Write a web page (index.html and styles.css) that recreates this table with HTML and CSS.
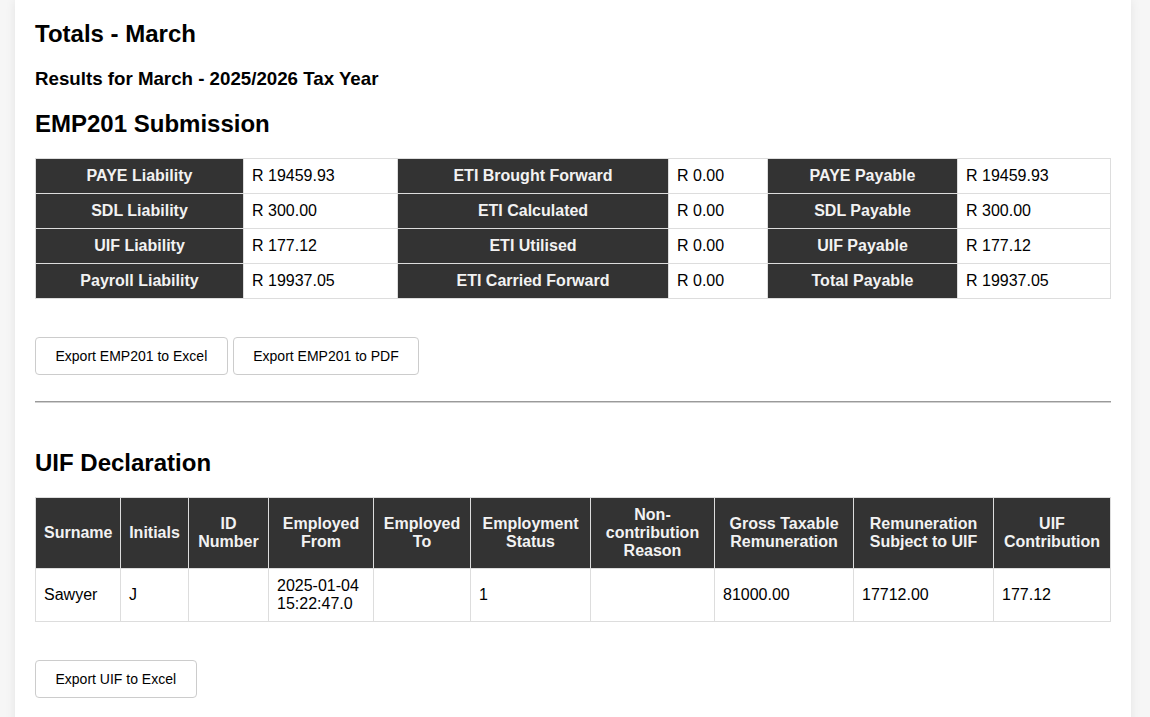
FILE: index.html
```html
<!DOCTYPE html>
<html lang="en">
<head>
<meta charset="utf-8">
<title>Totals - March</title>
<link rel="stylesheet" href="styles.css">
</head>
<body>
<div class="page">
  <h2 class="title">Totals - March</h2>
  <h3 class="subtitle">Results for March - 2025/2026 Tax Year</h3>

  <h2 class="section">EMP201 Submission</h2>
  <table class="grid emp">
    <colgroup>
      <col class="c1"><col class="c2"><col class="c3"><col class="c4"><col class="c5"><col class="c6">
    </colgroup>
    <tbody>
      <tr><th>PAYE Liability</th><td>R 19459.93</td><th>ETI Brought Forward</th><td>R 0.00</td><th>PAYE Payable</th><td>R 19459.93</td></tr>
      <tr><th>SDL Liability</th><td>R 300.00</td><th>ETI Calculated</th><td>R 0.00</td><th>SDL Payable</th><td>R 300.00</td></tr>
      <tr><th>UIF Liability</th><td>R 177.12</td><th>ETI Utilised</th><td>R 0.00</td><th>UIF Payable</th><td>R 177.12</td></tr>
      <tr><th>Payroll Liability</th><td>R 19937.05</td><th>ETI Carried Forward</th><td>R 0.00</td><th>Total Payable</th><td>R 19937.05</td></tr>
    </tbody>
  </table>

  <div class="actions">
    <button class="btn" type="button">Export EMP201 to Excel</button>
    <button class="btn" type="button">Export EMP201 to PDF</button>
  </div>

  <hr class="divider">

  <h2 class="section uif-title">UIF Declaration</h2>
  <table class="grid uif">
    <colgroup>
      <col class="u1"><col class="u2"><col class="u3"><col class="u4"><col class="u5"><col class="u6"><col class="u7"><col class="u8"><col class="u9"><col class="u10">
    </colgroup>
    <thead>
      <tr>
        <th>Surname</th>
        <th>Initials</th>
        <th>ID Number</th>
        <th>Employed From</th>
        <th>Employed To</th>
        <th>Employment Status</th>
        <th>Non-contribution Reason</th>
        <th>Gross Taxable Remuneration</th>
        <th>Remuneration Subject to UIF</th>
        <th>UIF Contribution</th>
      </tr>
    </thead>
    <tbody>
      <tr>
        <td>Sawyer</td>
        <td>J</td>
        <td></td>
        <td>2025-01-04 15:22:47.0</td>
        <td></td>
        <td>1</td>
        <td></td>
        <td>81000.00</td>
        <td>17712.00</td>
        <td>177.12</td>
      </tr>
    </tbody>
  </table>

  <div class="actions">
    <button class="btn" type="button">Export UIF to Excel</button>
  </div>
</div>
</body>
</html>
```

FILE: styles.css
```css
html, body {
  margin: 0;
  padding: 0;
}

body {
  background: #f6f6f6;
  font-family: "Liberation Sans", Arial, sans-serif;
  color: #000;
}

.page {
  box-sizing: border-box;
  width: 1116px;
  min-height: 717px;
  margin-left: 15px;
  padding: 20px 20px 30px;
  background: #fff;
  box-shadow: 0 0 10px rgba(0, 0, 0, 0.08);
}

h2, h3 {
  font-weight: bold;
  line-height: 1.15;
}

.title {
  font-size: 24px;
  margin: 0;
}

.subtitle {
  font-size: 18.72px;
  margin: 20px 0 0;
}

.section {
  font-size: 24px;
  margin: 21px 0 20px;
}

.grid {
  width: 100%;
  border-collapse: collapse;
  table-layout: fixed;
  font-size: 16px;
}

.grid th,
.grid td {
  border: 1px solid #ddd;
  padding: 8px;
  line-height: 18px;
}

.grid th {
  background: #333;
  color: #f2f2f2;
  font-weight: bold;
  text-align: center;
}

.grid td {
  text-align: left;
  background: #fff;
}

.emp .c1 { width: 208px; }
.emp .c2 { width: 154px; }
.emp .c3 { width: 271px; }
.emp .c4 { width: 99px; }
.emp .c5 { width: 190px; }
.emp .c6 { width: 153px; }

.uif .u1 { width: 85px; }
.uif .u2 { width: 68px; }
.uif .u3 { width: 80px; }
.uif .u4 { width: 105px; }
.uif .u5 { width: 97px; }
.uif .u6 { width: 120px; }
.uif .u7 { width: 124px; }
.uif .u8 { width: 139px; }
.uif .u9 { width: 140px; }
.uif .u10 { width: 117px; }

.actions {
  display: flex;
  gap: 5px;
  margin-top: 38px;
}

.btn {
  font-family: "Liberation Sans", Arial, sans-serif;
  font-size: 14px;
  line-height: 16px;
  padding: 10px 19.5px;
  background: #fff;
  color: #000;
  border: 1px solid #ccc;
  border-radius: 4px;
  cursor: pointer;
}

.divider {
  margin: 26px 0 0;
  height: 0;
  border: none;
  border-top: 1px solid #9a9a9a;
  border-bottom: 1px solid #d0d0d0;
}

.uif-title {
  margin-top: 46px;
  margin-bottom: 21px;
}
```
